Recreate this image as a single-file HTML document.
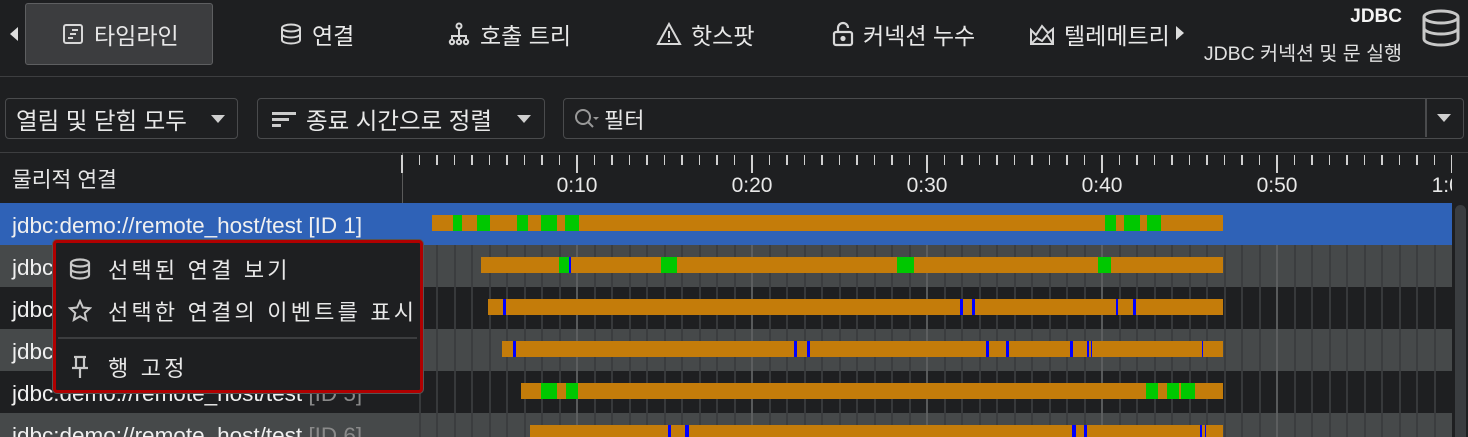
<!DOCTYPE html>
<html><head><meta charset="utf-8">
<style>
*{box-sizing:border-box;margin:0;padding:0}
html,body{width:1468px;height:437px;overflow:hidden}
body{background:#1e1f21;font-family:"Liberation Sans","Noto Sans CJK KR",sans-serif;color:#e6e6e6;position:relative}
.abs{position:absolute}
.tab{position:absolute;top:4px;height:60px;display:flex;align-items:center;font-size:23px;color:#e8e8e8;white-space:nowrap}
.tab svg{margin-right:9px}
.dd{position:absolute;top:98px;height:41px;border:1.5px solid #4a4b4d;border-radius:4px;display:flex;align-items:center;font-size:23.5px;color:#e8e8e8;padding-left:10px;white-space:nowrap}
.tri{position:absolute;width:0;height:0;border-left:7px solid transparent;border-right:7px solid transparent;border-top:8px solid #cfcfcf}
.row{position:absolute;left:0;width:1452px;height:42px}
.lbl{position:absolute;left:12px;font-size:22.5px;color:#f0f0f0;white-space:nowrap;line-height:42px}
.lbl span{color:#8a8a8a}
.bar{position:absolute;height:16px;background:#c47c0a}
.g{position:absolute;top:0;height:16px;background:#00c800}
.b{position:absolute;top:0;height:16px;background:#0000ff}
.mi{position:absolute;left:0;font-size:22px;letter-spacing:3.2px;color:#e8e8e8;display:flex;align-items:center;white-space:nowrap}
</style></head><body>
<!-- top nav -->
<div class="abs" style="left:10px;top:27px;width:0;height:0;border-top:7px solid transparent;border-bottom:7px solid transparent;border-right:8px solid #ddd"></div>
<div class="abs" style="left:25px;top:3px;width:188px;height:62px;background:#3c3d3f;border:1.5px solid #5e5f61;border-radius:3px"></div>
<div class="tab" style="left:61px"><svg width="24" height="24" viewBox="0 0 24 24" fill="none" stroke="#d8d8d8" stroke-width="2"><rect x="3" y="3" width="18" height="18" rx="2"/><path d="M11 8h6M9 12h6M7 16h5"/></svg>타임라인</div>
<div class="tab" style="left:279px"><svg width="24" height="24" viewBox="0 0 24 24" fill="none" stroke="#d8d8d8" stroke-width="2"><ellipse cx="12" cy="6" rx="9" ry="3.5"/><path d="M3 6v12c0 2 4 3.5 9 3.5s9-1.5 9-3.5V6M3 12c0 2 4 3.5 9 3.5s9-1.5 9-3.5"/></svg>연결</div>
<div class="tab" style="left:447px"><svg width="24" height="24" viewBox="0 0 24 24" fill="none" stroke="#d8d8d8" stroke-width="2"><circle cx="12" cy="4" r="2.5"/><path d="M12 7v6M5 17v-3h14v3M12 13v4"/><circle cx="5" cy="20" r="2.2"/><circle cx="12" cy="20" r="2.2"/><circle cx="19" cy="20" r="2.2"/></svg>호출 트리</div>
<div class="tab" style="left:656px"><svg width="26" height="24" viewBox="0 0 26 24" fill="none" stroke="#d8d8d8" stroke-width="2"><path d="M13 2L2 22h22z"/><path d="M13 9v7M13 18v2"/></svg>핫스팟</div>
<div class="tab" style="left:832px"><svg width="22" height="26" viewBox="0 0 22 26" fill="none" stroke="#d8d8d8" stroke-width="2.2"><path d="M6 11V7a5 5 0 0 1 10 0"/><rect x="2" y="11" width="18" height="13" rx="2"/><circle cx="11" cy="17.5" r="1.5" fill="#d8d8d8"/></svg>커넥션 누수</div>
<div class="tab" style="left:1029px"><svg width="26" height="24" viewBox="0 0 26 24" fill="none" stroke="#d8d8d8" stroke-width="2"><path d="M2 22V8l5 5 6-9 6 7 5-4v15z"/><path d="M2 22l6-6 5 3 5-6 6 9" /></svg>텔레메트리</div>
<div class="abs" style="left:1176px;top:26px;width:0;height:0;border-top:7px solid transparent;border-bottom:7px solid transparent;border-left:8px solid #ddd"></div>
<div class="abs" style="right:66px;top:6px;font-size:19px;font-weight:bold;color:#f4f4f4">JDBC</div>
<div class="abs" style="right:66px;top:37px;font-size:19.5px;color:#e0e0e0;white-space:nowrap">JDBC 커넥션 및 문 실행</div>
<svg class="abs" style="left:1421px;top:8px" width="40" height="40" viewBox="0 0 40 40" fill="none" stroke="#c8c8c8" stroke-width="3"><ellipse cx="20" cy="9" rx="17" ry="6"/><path d="M3 9v22c0 3.3 7.6 6 17 6s17-2.7 17-6V9M3 20c0 3.3 7.6 6 17 6s17-2.7 17-6"/></svg>
<div class="abs" style="left:0;top:76px;width:1468px;height:1px;background:#3d3e40"></div>
<!-- toolbar -->
<div class="dd" style="left:5px;width:233px">열림 및 닫힘 모두<div class="tri" style="left:205px;top:16px"></div></div>
<div class="dd" style="left:257px;width:288px;padding-left:14px"><svg width="24" height="20" viewBox="0 0 24 20" style="margin-right:10px;flex:none"><rect x="0" y="3" width="24" height="3" fill="#ccc"/><rect x="0" y="9" width="17" height="3" fill="#ccc"/><rect x="0" y="15" width="9" height="3" fill="#ccc"/></svg>종료 시간으로 정렬<div class="tri" style="left:259px;top:16px"></div></div>
<div class="dd" style="left:563px;width:901px;padding-left:10px"><svg width="26" height="24" viewBox="0 0 26 24" fill="none" stroke="#999" stroke-width="2"><circle cx="9" cy="10" r="7"/><path d="M14 15l5 5"/><path d="M19 10h6l-3 3z" fill="#999" stroke="none"/></svg><span style="margin-left:4px;color:#e6e6e6;font-size:22px">필터</span>
<div class="abs" style="left:861px;top:0;width:1.5px;height:38px;background:#4a4b4d"></div><div class="tri" style="left:873px;top:15px"></div></div>
<div class="abs" style="left:0;top:152px;width:1468px;height:1px;background:#3d3e40"></div>
<!-- column header -->
<div class="abs" style="left:12px;top:163px;font-size:21.5px;color:#e6e6e6">물리적 연결</div>
<div class="abs" style="left:402px;top:153px;width:1px;height:284px;background:#5a5a5a"></div>
<div id="ruler" class="abs" style="left:0;top:153px;width:1452px;height:50px;overflow:hidden"></div>
<!-- rows -->
<div class="row" style="top:203px;background:#2f62b7"></div>
<div class="row" style="top:245px;background:#46494a"></div>
<div class="row" style="top:287px;background:#1e1f21"></div>
<div class="row" style="top:329px;background:#46494a"></div>
<div class="row" style="top:371px;background:#1e1f21"></div>
<div class="row" style="top:413px;height:24px;background:#46494a"></div>
<div id="grid"></div>
<div class="abs" style="left:0;top:203px;width:402px;height:234px;overflow:hidden">
<div class="lbl" style="top:2px">jdbc:demo://remote_host/test [ID 1]</div>
<div class="lbl" style="top:44px">jdbc:demo://remote_host/test <span>[ID 2]</span></div>
<div class="lbl" style="top:86px">jdbc:demo://remote_host/test <span>[ID 3]</span></div>
<div class="lbl" style="top:128px">jdbc:demo://remote_host/test <span>[ID 4]</span></div>
<div class="lbl" style="top:170px">jdbc:demo://remote_host/test <span>[ID 5]</span></div>
<div class="lbl" style="top:212px">jdbc:demo://remote_host/test <span>[ID 6]</span></div>
</div>
<div id="bars" class="abs" style="left:0;top:0;width:1468px;height:437px;overflow:hidden"></div>
<!-- scrollbar -->
<div class="abs" style="left:1455px;top:205px;width:11px;height:232px;background:#3a3d40;border-radius:6px 6px 0 0"></div>
<!-- context menu -->
<div class="abs" style="left:53px;top:240px;width:370px;height:153px;background:#1e1f21;border:3.5px solid #b00000;border-radius:4px;box-shadow:0 0 0 1px #555">
<div class="mi" style="top:10px;left:12px"><svg width="24" height="24" viewBox="0 0 24 24" fill="none" stroke="#c8c8c8" stroke-width="2.2" style="margin-right:16px"><ellipse cx="12" cy="6" rx="9" ry="3.5"/><path d="M3 6v12c0 2 4 3.5 9 3.5s9-1.5 9-3.5V6M3 12c0 2 4 3.5 9 3.5s9-1.5 9-3.5"/></svg>선택된 연결 보기</div>
<div class="mi" style="top:52px;left:12px"><svg width="24" height="24" viewBox="0 0 24 24" fill="none" stroke="#c8c8c8" stroke-width="2" style="margin-right:16px"><path d="M12 2l2.9 6.5 7.1.7-5.3 4.8 1.5 7L12 17.3 5.8 21l1.5-7L2 9.2l7.1-.7z"/></svg>선택한 연결의 이벤트를 표시</div>
<div class="abs" style="left:2px;top:94px;width:359px;height:2px;background:#3c3d3f"></div>
<div class="mi" style="top:108px;left:12px"><svg width="24" height="26" viewBox="0 0 24 26" fill="none" stroke="#c8c8c8" stroke-width="2.2" style="margin-right:16px"><path d="M6 3h12M8 3v10M16 3v10M4 14h16M12 14v10"/></svg>행 고정</div>
</div>
<script>
var X=function(s){return 402+17.5*s};
var r=document.getElementById('ruler'),h='';
for(var s=0;s<=60;s++){var x=X(s),maj=s%10==0;
h+='<div class="abs" style="left:'+(x-0.75)+'px;top:2px;width:1.5px;height:'+(maj?18:10)+'px;background:#d0d0d0"></div>';
if(maj&&s>0)h+='<div class="abs" style="left:'+(x-30)+'px;top:21px;width:60px;text-align:center;font-size:21px;color:#e8e8e8">'+(s==60?'1:00':'0:'+s)+'</div>';}
r.innerHTML=h;
var g='';
for(var s=1;s<60;s++){var x=X(s);
g+='<div class="abs" style="left:'+(x-1)+'px;top:245px;width:2px;height:192px;background:'+(s%10==0?'#5e6062':'#3a3c3e')+';opacity:.9"></div>';}
document.getElementById('grid').innerHTML=g;
var rows=[
[432,[['g',453,462],['g',477,490],['g',517,528],['g',541,557],['g',565,579],['g',1105,1116],['g',1124,1140],['g',1147,1161]]],
[481,[['g',559,569],['b',569,571],['g',661,677],['g',897,914],['g',1098,1111]]],
[488,[['b',503,506],['b',960,963],['b',972,975],['b',1116,1118],['b',1133,1136]]],
[502,[['b',513,516],['b',794,797],['b',807,810],['b',986,989],['b',1006,1009],['b',1070,1073],['b',1087,1089],['b',1091,1092],['b',1202,1203]]],
[521,[['g',541,557],['g',566,578],['g',1146,1158],['g',1167,1179],['g',1181,1195]]],
[530,[['b',668,671],['b',685,689],['b',1072,1076],['b',1084,1087],['b',1200,1202],['b',1205,1206]]]];
var b='';
rows.forEach(function(rw,i){var st=rw[0];b+='<div class="bar" style="left:'+st+'px;top:'+(215+42*i)+'px;width:'+(1223-st)+'px">';
rw[1].forEach(function(sg){b+='<div class="'+sg[0]+'" style="left:'+(sg[1]-st)+'px;width:'+(sg[2]-sg[1])+'px"></div>'});b+='</div>';});
document.getElementById('bars').innerHTML=b;
</script>
</body></html>
